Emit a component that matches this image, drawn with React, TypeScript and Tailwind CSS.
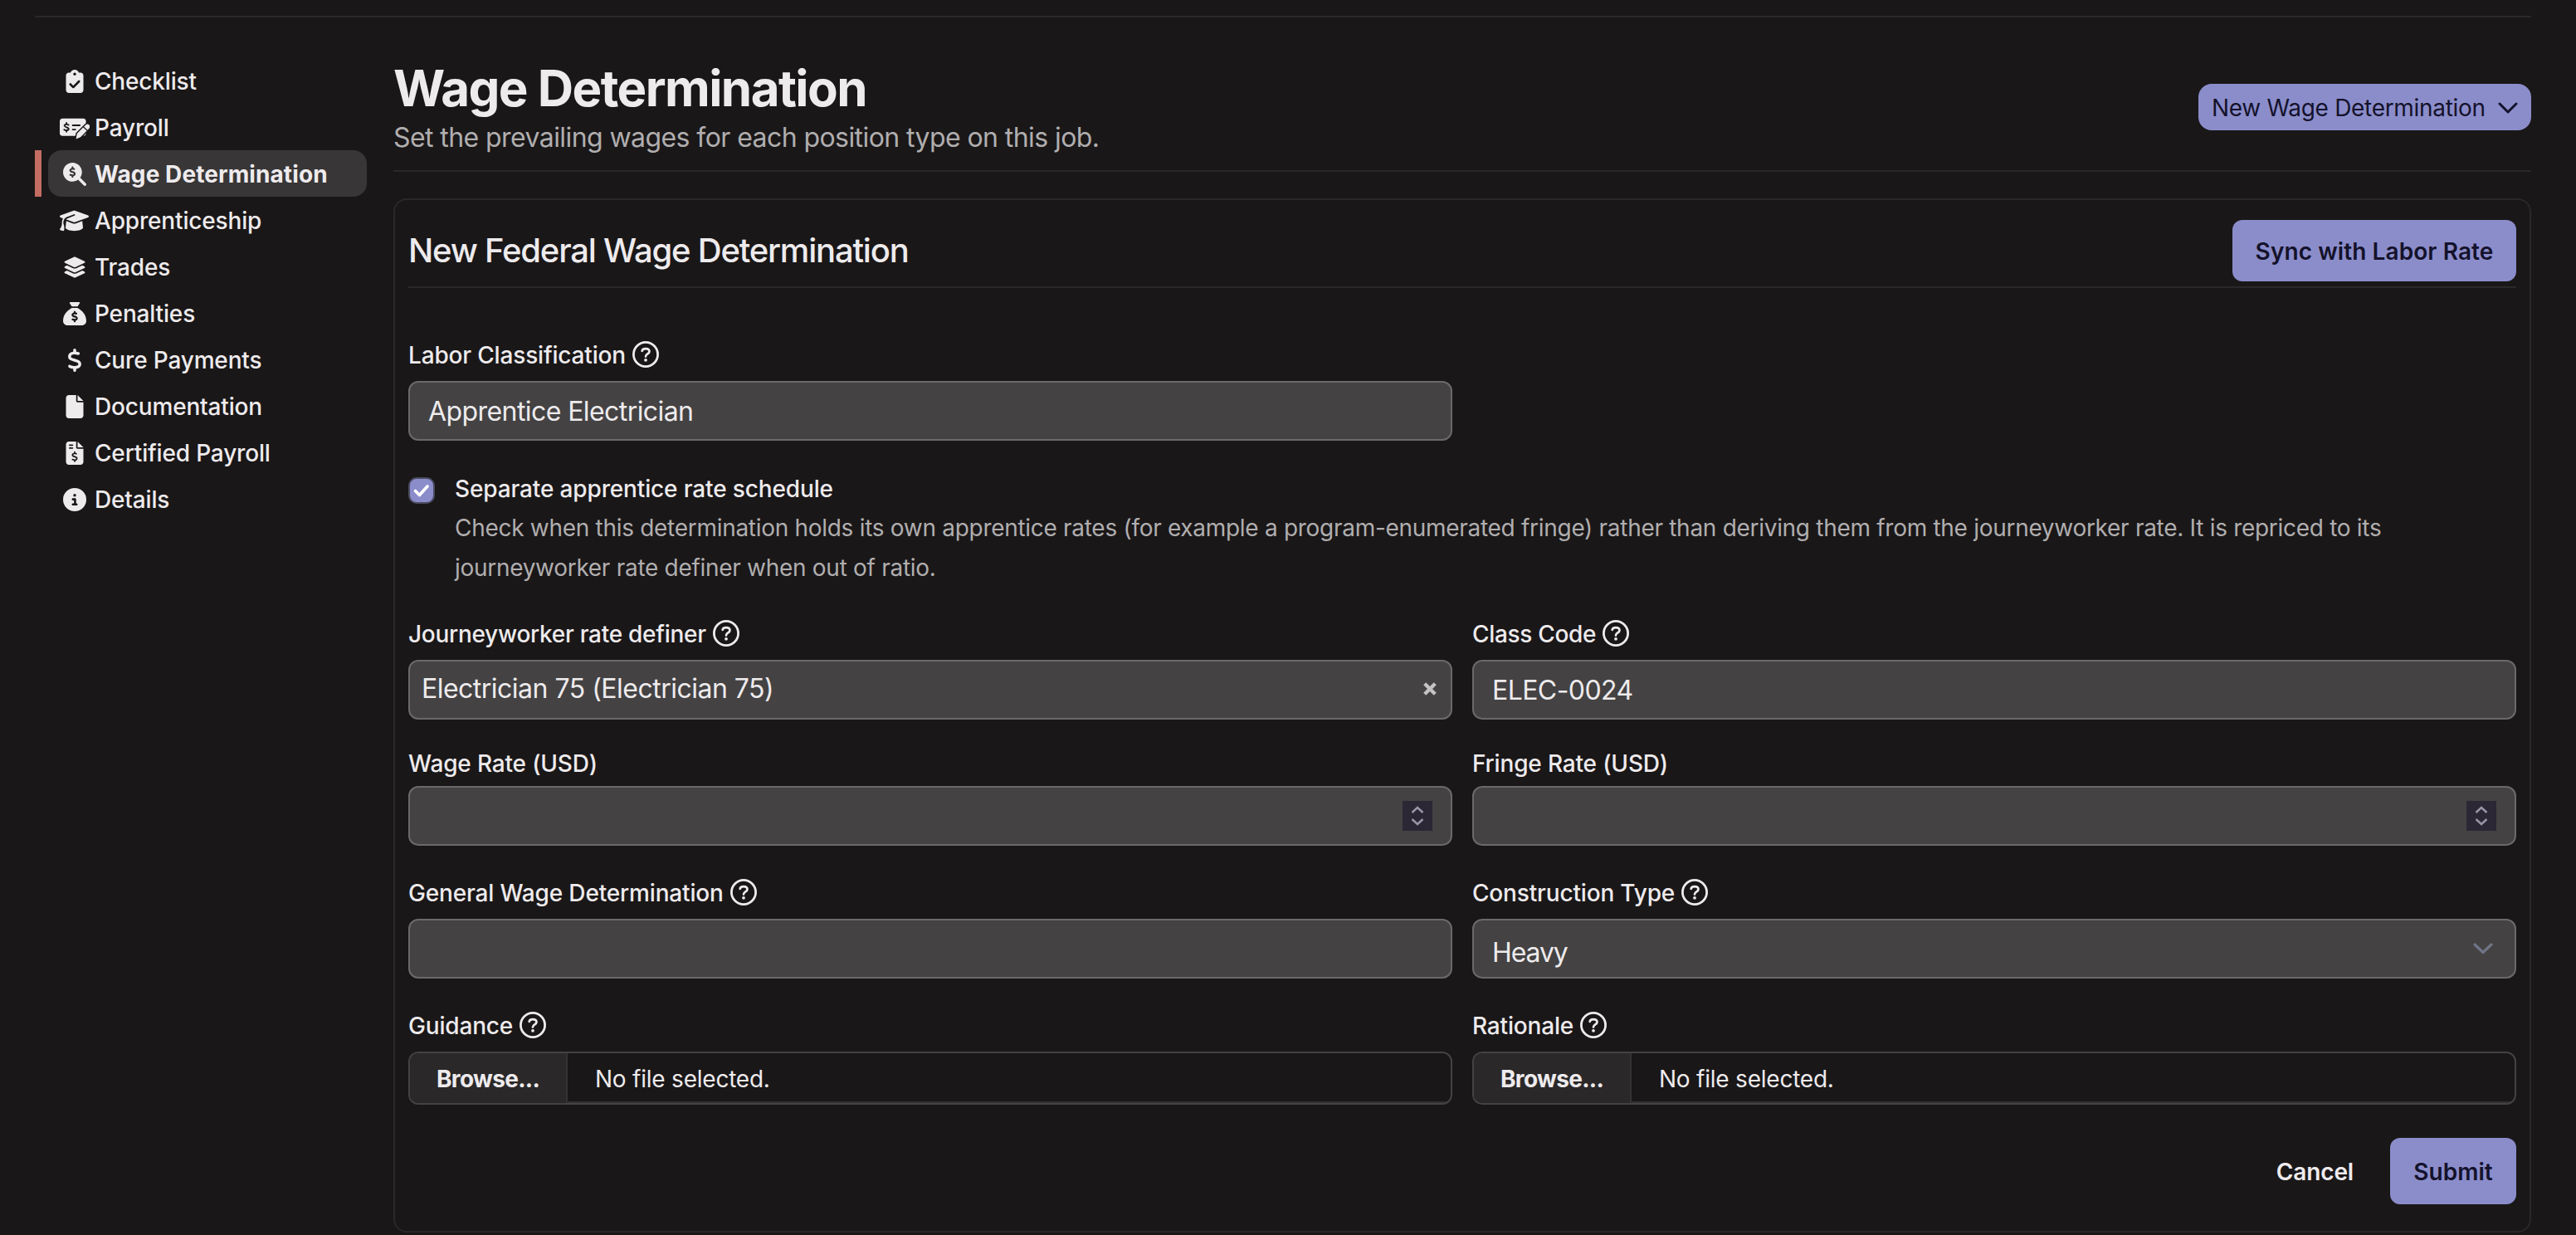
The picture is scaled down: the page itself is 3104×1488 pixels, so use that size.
import type { ReactNode } from "react";
import clsx from "clsx";
import {
  FaCircleInfo,
  FaClipboardCheck,
  FaDollarSign,
  FaFile,
  FaFileInvoiceDollar,
  FaGraduationCap,
  FaLayerGroup,
  FaMagnifyingGlassDollar,
  FaSackDollar,
} from "react-icons/fa6";

function MoneyCheckPenIcon() {
  return (
    <svg width="36" height="28" viewBox="0 0 36 28" fill="none" className="shrink-0">
      <rect x="0" y="2.8" width="31.6" height="21" rx="3.6" fill="currentColor" />
      <g stroke="#1a1718" strokeWidth="1.8" strokeLinecap="round">
        <path d="M10.7 10.6C9.6 9.6 5.7 9.3 5.6 11.4C5.5 13.6 10.9 13 10.8 15.4C10.7 17.6 6.5 17.2 5.3 16.2M8.1 8v1.6M8.1 17.2v1.6" />
        <path d="M15.6 11h8.6M15.6 16.2h3.2" />
      </g>
      <path
        d="M31.2 10.6a2.9 2.9 0 0 1 4.2 4.2L25 25.2L19.6 27.6L20.8 21Z"
        fill="currentColor"
        stroke="#1a1718"
        strokeWidth="3"
        strokeLinejoin="round"
        paintOrder="stroke"
      />
      <path d="M28.4 12.8L33.2 17.2" stroke="#1a1718" strokeWidth="1.2" />
    </svg>
  );
}

function HelpIcon() {
  return (
    <svg width="32" height="32" viewBox="0 0 32 32" fill="none" className="shrink-0">
      <circle cx="16" cy="16" r="14.6" stroke="currentColor" strokeWidth="2.8" />
      <path
        d="M11.7 11.9C11.9 9.9 13.6 9.1 16 9.1C18.7 9.1 20.5 10.4 20.5 12.5C20.5 15.6 16 15.4 16 18.6"
        stroke="currentColor"
        strokeWidth="2.7"
        strokeLinecap="round"
      />
      <circle cx="16" cy="22.8" r="1.9" fill="currentColor" />
    </svg>
  );
}

const navItems: { label: string; icon: ReactNode; active?: boolean }[] = [
  { label: "Checklist", icon: <FaClipboardCheck /> },
  { label: "Payroll", icon: <MoneyCheckPenIcon /> },
  { label: "Wage Determination", icon: <FaMagnifyingGlassDollar />, active: true },
  { label: "Apprenticeship", icon: <FaGraduationCap className="h-7 w-[35px]" /> },
  { label: "Trades", icon: <FaLayerGroup /> },
  { label: "Penalties", icon: <FaSackDollar /> },
  { label: "Cure Payments", icon: <FaDollarSign /> },
  { label: "Documentation", icon: <FaFile /> },
  { label: "Certified Payroll", icon: <FaFileInvoiceDollar /> },
  { label: "Details", icon: <FaCircleInfo /> },
];

function Sidebar() {
  return (
    <nav className="mt-12 w-[400px] shrink-0">
      {navItems.map((item) => (
        <a key={item.label} className="flex h-14 gap-2">
          <span className={clsx("w-2", item.active && "bg-[#c36d62]")} />
          <span
            className={clsx(
              "flex flex-1 items-center gap-[7px] rounded-2xl pt-0.5 pl-3.5",
              item.active
                ? "bg-[#383637] font-bold tracking-[0.003em]"
                : "font-medium tracking-[-0.006em]"
            )}
          >
            <span className="flex w-[35px] justify-center">{item.icon}</span>
            {item.label}
          </span>
        </a>
      ))}
    </nav>
  );
}

function Label({ children, help }: { children: ReactNode; help?: boolean }) {
  return (
    <label
      className={clsx(
        "mb-4 flex items-center gap-2 font-medium tracking-[-0.006em]",
        help ? "h-8" : "h-6"
      )}
    >
      <span className="pt-0.5">{children}</span>
      {help && <HelpIcon />}
    </label>
  );
}

function Box({ children, className }: { children?: ReactNode; className?: string }) {
  return (
    <div
      className={clsx(
        "flex h-[72px] items-center justify-between rounded-xl border-2 border-[#6b6969] bg-[#444243] text-[32px] tracking-[-0.018em]",
        className
      )}
    >
      {children}
    </div>
  );
}

function Spinner() {
  return (
    <span className="ml-auto flex size-9 items-center justify-center bg-[#2b2735] text-[#9b95a8]">
      <svg width="16" height="26" viewBox="0 0 16 26" fill="none" stroke="currentColor" strokeWidth="2.4">
        <path d="M1.5 9L8 3L14.5 9M1.5 17L8 23L14.5 17" />
      </svg>
    </span>
  );
}

function FileInput() {
  return (
    <div className="flex h-16 overflow-hidden rounded-xl border-2 border-[#444243]">
      <span className="flex w-[190px] items-center border-r-2 border-[#343233] bg-[#2a2829] pt-0.5 pl-8 font-bold tracking-[-0.024em]">
        Browse...
      </span>
      <span className="flex flex-1 items-center border-b-2 border-[#343233] pt-1 pl-[33px] tracking-[-0.008em]">
        No file selected.
      </span>
    </div>
  );
}

export default function App() {
  return (
    <div className="h-[1488px] w-full overflow-hidden bg-[#1a1718] pt-[19px] pr-[54px] pl-[42px] font-['Inter','Liberation_Sans',sans-serif] text-[28px] text-[#eeebed]">
      <div className="flex gap-8 border-t-2 border-[#2a2829]">
        <Sidebar />

        <main className="min-w-0 flex-1 pt-12">
          {/* Page header */}
          <header className="flex h-[138px] items-start justify-between border-b-2 border-[#2a2829]">
            <div>
              <h1 className="text-[60px] leading-[74px] font-bold tracking-[-0.026em]">
                Wage Determination
              </h1>
              <p className="pt-px text-[32px] leading-[44px] tracking-[-0.018em] text-[#b0aeaf]">
                Set the prevailing wages for each position type on this job.
              </p>
            </div>
            <button className="mt-8 flex h-14 w-[401px] items-center justify-between rounded-2xl bg-[#8b8dcb] px-4 tracking-[-0.011em] text-[#14122b]">
              <span className="pt-0.5">New Wage Determination</span>
              <svg width="24" height="16" viewBox="0 0 24 16" fill="none" stroke="currentColor" strokeWidth="3" strokeLinecap="round" strokeLinejoin="round" className="mt-0.5">
                <path d="M2 3L12 13L22 3" />
              </svg>
            </button>
          </header>

          {/* Form card */}
          <section className="mt-8 h-[1246px] rounded-2xl border-2 border-[#2a2829] px-4 pt-6">
            <div className="flex items-center justify-between border-b-2 border-[#2a2829] pb-1.5">
              <h2 className="text-[40px] leading-[48px] font-medium tracking-[-0.03em]">
                New Federal Wage Determination
              </h2>
              <button className="h-[74px] w-[342px] rounded-xl bg-[#8b8dcb] pt-0.5 font-semibold tracking-[0.003em] text-[#14122b]">
                Sync with Labor Rate
              </button>
            </div>

            <div className="mt-16 grid grid-cols-2 gap-x-6 gap-y-10">
              <div>
                <Label help>Labor Classification</Label>
                <Box className="px-[22px] pt-0.5">Apprentice Electrician</Box>
              </div>

              <div className="col-span-2 -mt-2 flex gap-6">
                <span className="mt-3 flex size-8 shrink-0 items-center justify-center rounded-[10px] border-2 border-[#4b4b60] bg-[#8b8dcb]">
                  <svg width="20" height="20" viewBox="0 0 20 20" fill="none" stroke="white" strokeWidth="3.6" strokeLinecap="round" strokeLinejoin="round">
                    <path d="M2.5 10.5L7.5 15.5L17 5" />
                  </svg>
                </span>
                <div className="h-36 pt-0.5 leading-[48px]">
                  <p className="-mb-px font-medium tracking-[-0.005em]">Separate apprentice rate schedule</p>
                  <p className="w-[2400px] tracking-[-0.0105em] text-[#b0aeaf]">
                    Check when this determination holds its own apprentice rates (for example a
                    program-enumerated fringe) rather than deriving them from the journeyworker
                    rate. It is repriced to its journeyworker rate definer when out of ratio.
                  </p>
                </div>
              </div>

              <div>
                <Label help>
                  <span className="tracking-[-0.01em]">Journeyworker rate definer</span>
                </Label>
                <Box className="pr-[17px] pb-0.5 pl-[14px]">
                  <span className="tracking-[-0.016em]">Electrician 75 (Electrician 75)</span>
                  <svg width="16" height="16" viewBox="0 0 14 14" className="text-[#c4c2c3]" stroke="currentColor" strokeWidth="3.8">
                    <path d="M1.5 1.5L12.5 12.5M12.5 1.5L1.5 12.5" />
                  </svg>
                </Box>
              </div>
              <div>
                <Label help>
                  <span className="tracking-[-0.011em]">Class Code</span>
                </Label>
                <Box className="px-[22px] pt-0.5">ELEC-0024</Box>
              </div>

              <div>
                <Label>Wage Rate (USD)</Label>
                <Box className="px-[22px]">
                  <Spinner />
                </Box>
              </div>
              <div>
                <Label>Fringe Rate (USD)</Label>
                <Box className="px-[22px]">
                  <Spinner />
                </Box>
              </div>

              <div>
                <Label help>General Wage Determination</Label>
                <Box />
              </div>
              <div>
                <Label help>Construction Type</Label>
                <Box className="pr-[25px] pl-[22px]">
                  <span className="pt-2.5 tracking-[-0.035em]">Heavy</span>
                  <svg width="26" height="18" viewBox="0 0 26 18" fill="none" stroke="#6f7486" strokeWidth="3.2" strokeLinecap="round" strokeLinejoin="round">
                    <path d="M3 4L13 13.5L23 4" />
                  </svg>
                </Box>
              </div>

              <div>
                <Label help>Guidance</Label>
                <FileInput />
              </div>
              <div>
                <Label help>Rationale</Label>
                <FileInput />
              </div>
            </div>

            <div className="mt-10 flex items-center justify-end gap-[44px] font-semibold">
              <button className="pt-0.5 tracking-[-0.005em]">Cancel</button>
              <button className="h-20 w-[152px] rounded-xl bg-[#8b8dcb] pt-0.5 text-[#14122b]">
                Submit
              </button>
            </div>
          </section>
        </main>
      </div>
    </div>
  );
}
